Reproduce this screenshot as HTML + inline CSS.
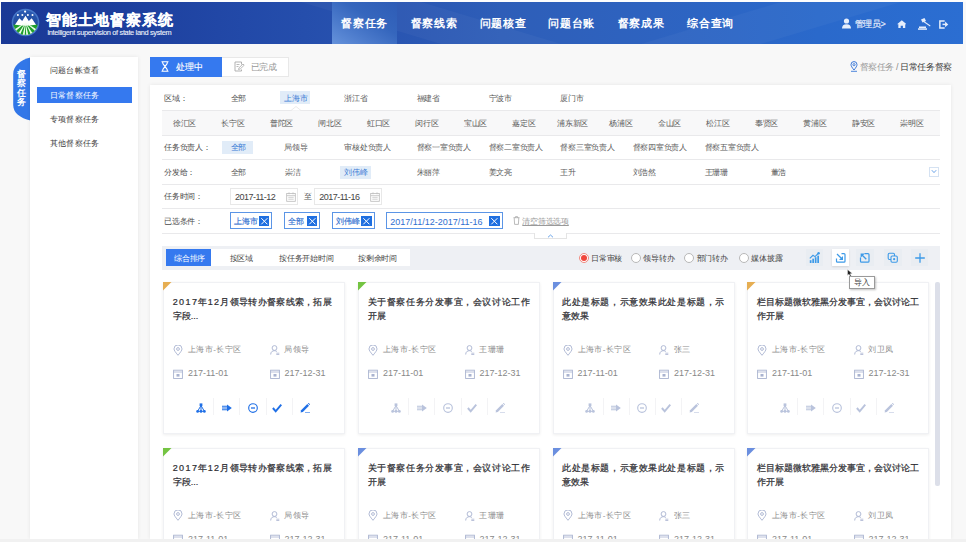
<!DOCTYPE html>
<html><head><meta charset="utf-8">
<style>
*{margin:0;padding:0;box-sizing:border-box}
html,body{width:966px;height:542px;overflow:hidden}
body{position:relative;background:#f8f8f8;font-family:"Liberation Sans",sans-serif;color:#666}
.a{position:absolute;white-space:nowrap}
.nav{top:-0.5px;height:42px;line-height:42px;font-size:11px;letter-spacing:0.8px;font-weight:bold;color:#fff}
.card{position:absolute;width:182px;height:152px;background:#fff;border:1px solid #f0f1f4;box-shadow:0 1px 3px rgba(0,0,0,0.07)}
</style></head>
<body>

<div class="a" style="left:0;top:0;width:966px;height:2px;background:#fdfdfd"></div>
<div class="a" style="left:1px;top:2px;width:962px;height:42px;overflow:hidden;background:linear-gradient(90deg,#1a3996 0%,#1c3d9b 10%,#2249a8 25%,#2853b0 38%,#2e5eb8 52%,#2e63c0 68%,#2a69cb 85%,#2b6ed2 100%)">
  <svg class="a" style="left:0;top:0" width="962" height="42">
    <polygon points="300,0 420,0 560,42 440,42" fill="rgba(255,255,255,0.035)"/>
    <polygon points="780,0 900,0 760,42 640,42" fill="rgba(255,255,255,0.035)"/>
  </svg>
  <div class="a" style="left:331px;top:0;width:65px;height:42px;background:linear-gradient(32deg,#6592db 0%,#4c7bcc 30%,#3566bd 60%,#2e5cb6 100%)"></div>
  <svg class="a" style="left:9px;top:5px" width="32" height="32" viewBox="0 0 32 32">
    <defs><clipPath id="lc"><circle cx="15.5" cy="15.5" r="12.3"/></clipPath>
    <linearGradient id="lg" x1="0" y1="0" x2="0" y2="1"><stop offset="0" stop-color="#2c5cb4"/><stop offset="1" stop-color="#1a3f8e"/></linearGradient></defs>
    <circle cx="15.5" cy="15.5" r="13.8" fill="#4677c8"/>
    <circle cx="15.5" cy="15.5" r="12.3" fill="url(#lg)"/>
    <g clip-path="url(#lc)">
    <path d="M0 19 L4.5 18.5 L9.3 11.3 L12.2 14 L15.5 8.8 L18.8 14 L21.7 11.3 L26.5 18.5 L31 19 L31 31 L0 31 Z" fill="#fff"/>
    <path d="M0 17 Q15.5 20.5 31 17 L31 31 L0 31 Z" fill="#1f9f2a"/>
    <path d="M15.5 15.5 L12 31 L14.6 31 Z M15.5 15.5 L16.4 31 L19 31 Z M15.5 15.5 L6 30 L8.6 31 Z M15.5 15.5 L22.4 31 L25 30 Z M15.5 15.5 L1 24.5 L2.3 27 Z M15.5 15.5 L28.7 27 L30 24.5 Z" fill="#eafbe6"/>
    </g>
    <circle cx="15.1" cy="4.6" r="1.1" fill="#fff"/>
    <circle cx="7.9" cy="7.9" r="1" fill="#fff"/><circle cx="12.4" cy="7.9" r="1" fill="#fff"/>
    <circle cx="17.9" cy="7.9" r="1" fill="#fff"/><circle cx="22.5" cy="7.9" r="1" fill="#fff"/>
  </svg>
  <div class="a" style="left:44.5px;top:7.5px;font-size:15px;font-weight:bold;color:#fff;line-height:20px;letter-spacing:1px;-webkit-text-stroke:0.2px #fff">智能土地督察系统</div>
  <div class="a" style="left:46.5px;top:25.5px;font-size:7.4px;color:#eef3fb;line-height:9px;letter-spacing:-0.33px;-webkit-text-stroke:0.1px #eef3fb">intelligent supervision of state land system</div>
  <div class="a nav" style="left:340px">督察任务</div>
  <div class="a nav" style="left:409.5px">督察线索</div>
  <div class="a nav" style="left:478.5px">问题核查</div>
  <div class="a nav" style="left:547px">问题台账</div>
  <div class="a nav" style="left:616.5px">督察成果</div>
  <div class="a nav" style="left:686px">综合查询</div>
  <svg class="a" style="left:840px;top:16px" width="11" height="11" viewBox="0 0 11 11"><circle cx="5.5" cy="3" r="2.6" fill="#e6eefc"/><path d="M1 10.5 Q1 6.2 5.5 6.2 Q10 6.2 10 10.5 Z" fill="#e6eefc"/></svg>
  <div class="a" style="left:853.5px;top:15.7px;font-size:9px;line-height:12px;color:#e2eafa;letter-spacing:-0.3px;-webkit-text-stroke:0.2px #e2eafa">管理员&gt;</div>
  <svg class="a" style="left:895.8px;top:17.6px" width="9.6" height="8.6" viewBox="0 0 11 10"><path d="M5.5 0.3 L11 5 L9.5 5 L9.5 9.7 L6.8 9.7 L6.8 6.8 L4.2 6.8 L4.2 9.7 L1.5 9.7 L1.5 5 L0 5 Z" fill="#e6eefc"/></svg>
  <svg class="a" style="left:917px;top:16px" width="13" height="12" viewBox="0 0 13 12"><path d="M3 1.5 L6.5 0 L8 3 L4.5 4.5 Z" fill="#e6eefc"/><path d="M6 3 L12.5 7.5 L12 8.5 L5.5 4Z" fill="#e6eefc"/><rect x="1" y="8.5" width="7" height="1.5" fill="#e6eefc"/><rect x="0" y="10.3" width="9" height="1.5" fill="#e6eefc"/></svg>
  <svg class="a" style="left:938px;top:18px" width="9.6" height="8.8" viewBox="0 0 11 10"><path d="M6.5 1 L1 1 L1 9 L6.5 9" fill="none" stroke="#e6eefc" stroke-width="1.7"/><path d="M4 5 L8.5 5" stroke="#e6eefc" stroke-width="1.7"/><path d="M7 1.8 L10.6 5 L7 8.2Z" fill="#e6eefc"/></svg>
</div>
<svg class="a" style="left:12px;top:57px" width="19" height="64" viewBox="0 0 19 64"><path d="M18.5 0.5 C8 3 1.2 9 1.2 17 L1.2 48 C1.2 56 8 61 18.5 63.5 Z" fill="#3277e8"/></svg>
<div class="a" style="left:16.5px;top:69.5px;width:11px;font-size:9px;line-height:9.6px;font-weight:bold;color:#fff;white-space:normal">督<br>察<br>任<br>务</div>
<div class="a" style="left:30px;top:57px;width:107.5px;height:482px;background:#fff;box-shadow:0 0 4px rgba(0,0,0,0.08)"></div>
<div class="a" style="left:37px;top:86.5px;width:95px;height:16.5px;background:#3579ef"></div>
<div class="a" style="left:49.5px;top:64px;font-size:8px;letter-spacing:0.4px;line-height:13px;color:#3c3c3c">问题台帐查看</div>
<div class="a" style="left:49.5px;top:88.5px;font-size:8px;letter-spacing:0.4px;line-height:13px;color:#fff">日常督察任务</div>
<div class="a" style="left:49.5px;top:112.5px;font-size:8px;letter-spacing:0.4px;line-height:13px;color:#3c3c3c">专项督察任务</div>
<div class="a" style="left:49.5px;top:137px;font-size:8px;letter-spacing:0.4px;line-height:13px;color:#3c3c3c">其他督察任务</div>
<div class="a" style="left:150px;top:57px;width:72px;height:19.5px;background:#3579ef"></div>
<svg class="a" style="left:160px;top:61px" width="10" height="11" viewBox="0 0 10 11"><path d="M1.5 0.7 H8.5 M1.5 10.3 H8.5 M2.5 0.7 C2.5 4 5 4.5 5 5.5 C5 6.5 2.5 7 2.5 10.3 M7.5 0.7 C7.5 4 5 4.5 5 5.5 C5 6.5 7.5 7 7.5 10.3" fill="none" stroke="#fff" stroke-width="1.1"/></svg>
<div class="a" style="left:175.5px;top:60.8px;font-size:9px;line-height:12px;color:#fff;-webkit-text-stroke:0.15px #fff">处理中</div>
<div class="a" style="left:222px;top:57px;width:66.5px;height:19.5px;background:#fff;border:1px solid #e8e8e8;border-left:none"></div>
<svg class="a" style="left:234px;top:61px" width="11" height="11" viewBox="0 0 11 11"><path d="M7.5 3.5 V1 H1 V10 H7.5 V8.5" fill="none" stroke="#aaa" stroke-width="0.9"/><path d="M2.5 3.5 H5.5 M2.5 5.5 H4.5" stroke="#aaa" stroke-width="0.8"/><path d="M4.5 8.5 L5 6.8 L9 3 L10.2 4.2 L6.2 8 Z" fill="none" stroke="#aaa" stroke-width="0.8"/></svg>
<div class="a" style="left:250.5px;top:60.5px;font-size:9px;letter-spacing:-0.3px;line-height:12px;color:#999">已完成</div>
<svg class="a" style="left:850px;top:61px" width="8" height="11" viewBox="0 0 8 11"><path d="M4 9 C2 6.5 1 5 1 3.6 A3 3 0 0 1 7 3.6 C7 5 6 6.5 4 9Z" fill="none" stroke="#3a78d8" stroke-width="1"/><circle cx="4" cy="3.7" r="1.1" fill="none" stroke="#3a78d8" stroke-width="0.9"/><path d="M1 10.3 H7" stroke="#3a78d8" stroke-width="0.9"/></svg>
<div class="a" style="left:859.5px;top:60.5px;font-size:9px;letter-spacing:-0.4px;line-height:12px;color:#999">督察任务 <span style="color:#888">/</span> <span style="color:#3a3a3a">日常任务督察</span></div>
<div class="a" style="left:150px;top:85px;width:801px;height:454px;background:#fff;box-shadow:0 0 4px rgba(0,0,0,0.08)"></div>
<div class="a" style="left:161.5px;top:110px;width:778px;height:25px;background:#f8f8f9"></div>
<div class="a" style="left:161.5px;top:109.5px;width:778px;height:1px;background:#e9e9eb"></div>
<div class="a" style="left:161.5px;top:134.5px;width:778px;height:1px;background:#e9e9eb"></div>
<div class="a" style="left:161.5px;top:159.0px;width:778px;height:1px;background:#e9e9eb"></div>
<div class="a" style="left:161.5px;top:183.5px;width:778px;height:1px;background:#e9e9eb"></div>
<div class="a" style="left:161.5px;top:207.8px;width:778px;height:1px;background:#e9e9eb"></div>
<div class="a" style="left:161.5px;top:232.5px;width:778px;height:1px;background:#e9e9eb"></div>
<svg class="a" style="left:291px;top:106px" width="10" height="5"><path d="M0 4.5 L5 0.5 L10 4.5" fill="#fff" stroke="#e6e6e6" stroke-width="0.8"/></svg>
<div class="a" style="left:164px;top:92.8px;line-height:12px;font-size:8px;letter-spacing:-0.25px;color:#4a4a4a;">区域：</div>
<div class="a" style="left:280.4px;top:91.2px;width:30.0px;height:12.799999999999997px;background:#e1ecf8"></div>
<div class="a" style="left:230.6px;top:92.8px;line-height:12px;font-size:8px;letter-spacing:-0.25px;color:#5a5a5a;">全部</div>
<div class="a" style="left:284px;top:92.8px;line-height:12px;font-size:8px;letter-spacing:-0.25px;color:#3a7bd5;">上海市</div>
<div class="a" style="left:344px;top:92.8px;line-height:12px;font-size:8px;letter-spacing:-0.25px;color:#5a5a5a;">浙江省</div>
<div class="a" style="left:416.5px;top:92.8px;line-height:12px;font-size:8px;letter-spacing:-0.25px;color:#5a5a5a;">福建省</div>
<div class="a" style="left:488.7px;top:92.8px;line-height:12px;font-size:8px;letter-spacing:-0.25px;color:#5a5a5a;">宁波市</div>
<div class="a" style="left:560.4px;top:92.8px;line-height:12px;font-size:8px;letter-spacing:-0.25px;color:#5a5a5a;">厦门市</div>
<div class="a" style="left:154.5px;width:60px;text-align:center;top:117.5px;line-height:12px;font-size:8px;letter-spacing:-0.25px;color:#5a5a5a">徐汇区</div>
<div class="a" style="left:203.0px;width:60px;text-align:center;top:117.5px;line-height:12px;font-size:8px;letter-spacing:-0.25px;color:#5a5a5a">长宁区</div>
<div class="a" style="left:251.5px;width:60px;text-align:center;top:117.5px;line-height:12px;font-size:8px;letter-spacing:-0.25px;color:#5a5a5a">普陀区</div>
<div class="a" style="left:300.0px;width:60px;text-align:center;top:117.5px;line-height:12px;font-size:8px;letter-spacing:-0.25px;color:#5a5a5a">闸北区</div>
<div class="a" style="left:348.5px;width:60px;text-align:center;top:117.5px;line-height:12px;font-size:8px;letter-spacing:-0.25px;color:#5a5a5a">虹口区</div>
<div class="a" style="left:397.0px;width:60px;text-align:center;top:117.5px;line-height:12px;font-size:8px;letter-spacing:-0.25px;color:#5a5a5a">闵行区</div>
<div class="a" style="left:445.5px;width:60px;text-align:center;top:117.5px;line-height:12px;font-size:8px;letter-spacing:-0.25px;color:#5a5a5a">宝山区</div>
<div class="a" style="left:494.0px;width:60px;text-align:center;top:117.5px;line-height:12px;font-size:8px;letter-spacing:-0.25px;color:#5a5a5a">嘉定区</div>
<div class="a" style="left:542.5px;width:60px;text-align:center;top:117.5px;line-height:12px;font-size:8px;letter-spacing:-0.25px;color:#5a5a5a">浦东新区</div>
<div class="a" style="left:591.0px;width:60px;text-align:center;top:117.5px;line-height:12px;font-size:8px;letter-spacing:-0.25px;color:#5a5a5a">杨浦区</div>
<div class="a" style="left:639.5px;width:60px;text-align:center;top:117.5px;line-height:12px;font-size:8px;letter-spacing:-0.25px;color:#5a5a5a">金山区</div>
<div class="a" style="left:688.0px;width:60px;text-align:center;top:117.5px;line-height:12px;font-size:8px;letter-spacing:-0.25px;color:#5a5a5a">松江区</div>
<div class="a" style="left:736.5px;width:60px;text-align:center;top:117.5px;line-height:12px;font-size:8px;letter-spacing:-0.25px;color:#5a5a5a">奉贤区</div>
<div class="a" style="left:785.0px;width:60px;text-align:center;top:117.5px;line-height:12px;font-size:8px;letter-spacing:-0.25px;color:#5a5a5a">黄浦区</div>
<div class="a" style="left:833.5px;width:60px;text-align:center;top:117.5px;line-height:12px;font-size:8px;letter-spacing:-0.25px;color:#5a5a5a">静安区</div>
<div class="a" style="left:882.0px;width:60px;text-align:center;top:117.5px;line-height:12px;font-size:8px;letter-spacing:-0.25px;color:#5a5a5a">崇明区</div>
<div class="a" style="left:164px;top:142.10000000000002px;line-height:12px;font-size:8px;letter-spacing:-0.25px;color:#4a4a4a;">任务负责人：</div>
<div class="a" style="left:222.3px;top:141.3px;width:30.599999999999994px;height:12.5px;background:#e1ecf8"></div>
<div class="a" style="left:230.6px;top:142.10000000000002px;line-height:12px;font-size:8px;letter-spacing:-0.25px;color:#3a7bd5;">全部</div>
<div class="a" style="left:284px;top:142.10000000000002px;line-height:12px;font-size:8px;letter-spacing:-0.25px;color:#5a5a5a;">局领导</div>
<div class="a" style="left:344.4px;top:142.10000000000002px;line-height:12px;font-size:8px;letter-spacing:-0.25px;color:#5a5a5a;">审核处负责人</div>
<div class="a" style="left:416.5px;top:142.10000000000002px;line-height:12px;font-size:8px;letter-spacing:-0.25px;color:#5a5a5a;">督察一室负责人</div>
<div class="a" style="left:488.7px;top:142.10000000000002px;line-height:12px;font-size:8px;letter-spacing:-0.25px;color:#5a5a5a;">督察二室负责人</div>
<div class="a" style="left:560.4px;top:142.10000000000002px;line-height:12px;font-size:8px;letter-spacing:-0.25px;color:#5a5a5a;">督察三室负责人</div>
<div class="a" style="left:632.5px;top:142.10000000000002px;line-height:12px;font-size:8px;letter-spacing:-0.25px;color:#5a5a5a;">督察四室负责人</div>
<div class="a" style="left:704.7px;top:142.10000000000002px;line-height:12px;font-size:8px;letter-spacing:-0.25px;color:#5a5a5a;">督察五室负责人</div>
<div class="a" style="left:164px;top:167.10000000000002px;line-height:12px;font-size:8px;letter-spacing:-0.25px;color:#4a4a4a;">分发给：</div>
<div class="a" style="left:340.4px;top:166.4px;width:30.400000000000034px;height:12.799999999999983px;background:#e1ecf8"></div>
<div class="a" style="left:230.6px;top:167.10000000000002px;line-height:12px;font-size:8px;letter-spacing:-0.25px;color:#5a5a5a;">全部</div>
<div class="a" style="left:285px;top:167.10000000000002px;line-height:12px;font-size:8px;letter-spacing:-0.25px;color:#5a5a5a;">崇洁</div>
<div class="a" style="left:344.4px;top:167.10000000000002px;line-height:12px;font-size:8px;letter-spacing:-0.25px;color:#3a7bd5;">刘伟峰</div>
<div class="a" style="left:416.5px;top:167.10000000000002px;line-height:12px;font-size:8px;letter-spacing:-0.25px;color:#5a5a5a;">朱丽萍</div>
<div class="a" style="left:488.7px;top:167.10000000000002px;line-height:12px;font-size:8px;letter-spacing:-0.25px;color:#5a5a5a;">姜文亮</div>
<div class="a" style="left:560.4px;top:167.10000000000002px;line-height:12px;font-size:8px;letter-spacing:-0.25px;color:#5a5a5a;">王升</div>
<div class="a" style="left:632.5px;top:167.10000000000002px;line-height:12px;font-size:8px;letter-spacing:-0.25px;color:#5a5a5a;">刘浩然</div>
<div class="a" style="left:704.7px;top:167.10000000000002px;line-height:12px;font-size:8px;letter-spacing:-0.25px;color:#5a5a5a;">王珊珊</div>
<div class="a" style="left:770.5px;top:167.10000000000002px;line-height:12px;font-size:8px;letter-spacing:-0.25px;color:#5a5a5a;">董浩</div>
<div class="a" style="left:928.6px;top:166.6px;width:10.4px;height:10px;border:1px solid #d5e2f2;background:#fff"></div>
<svg class="a" style="left:930.8px;top:169px" width="6" height="5"><path d="M0.8 1.2 L3 3.6 L5.2 1.2" fill="none" stroke="#5a9ae6" stroke-width="0.9"/></svg>
<div class="a" style="left:164px;top:191.3px;line-height:12px;font-size:8px;letter-spacing:-0.25px;color:#4a4a4a;">任务时间：</div>
<div class="a" style="left:230px;top:188.4px;width:68.19999999999999px;height:17px;border:1px solid #e8e8e8;background:#fff"></div>
<div class="a" style="left:235px;top:191.3px;line-height:12px;font-size:9px;letter-spacing:-0.5px;color:#444;">2017-11-12</div>
<svg class="a" style="left:285.7px;top:191.5px" width="10" height="10" viewBox="0 0 10 10"><rect x="0.7" y="1.5" width="8.6" height="7.8" fill="none" stroke="#bbb" stroke-width="0.8"/><path d="M0.7 3.6 H9.3 M3 0.3 V2.3 M7 0.3 V2.3 M2.3 5.3 H7.7 M2.3 7.2 H7.7" stroke="#bbb" stroke-width="0.7"/></svg>
<div class="a" style="left:314.2px;top:188.4px;width:68.30000000000001px;height:17px;border:1px solid #e8e8e8;background:#fff"></div>
<div class="a" style="left:319.2px;top:191.3px;line-height:12px;font-size:9px;letter-spacing:-0.5px;color:#444;">2017-11-16</div>
<svg class="a" style="left:370.0px;top:191.5px" width="10" height="10" viewBox="0 0 10 10"><rect x="0.7" y="1.5" width="8.6" height="7.8" fill="none" stroke="#bbb" stroke-width="0.8"/><path d="M0.7 3.6 H9.3 M3 0.3 V2.3 M7 0.3 V2.3 M2.3 5.3 H7.7 M2.3 7.2 H7.7" stroke="#bbb" stroke-width="0.7"/></svg>
<div class="a" style="left:304px;top:191.3px;line-height:12px;font-size:8px;letter-spacing:-0.25px;color:#5a5a5a;">至</div>
<div class="a" style="left:164px;top:215.8px;line-height:12px;font-size:8px;letter-spacing:-0.25px;color:#4a4a4a;">已选条件：</div>
<div class="a" style="left:230px;top:212px;width:42px;height:17px;border:1px solid #5b95e6;background:#fff"></div>
<div class="a" style="left:234px;top:215.8px;line-height:12px;font-size:8px;letter-spacing:-0.25px;color:#2f6fd0;-webkit-text-stroke:0.15px #2f6fd0">上海市</div>
<div class="a" style="left:258.7px;top:215.8px;width:10.7px;height:10.5px;background:#1f6fe0"></div><svg class="a" style="left:258.7px;top:215.8px" width="10.7" height="10.5"><path d="M2.3 2.2 L8.4 8.3 M8.4 2.2 L2.3 8.3" stroke="#fff" stroke-width="1"/></svg>
<div class="a" style="left:284px;top:212px;width:35.80000000000001px;height:17px;border:1px solid #5b95e6;background:#fff"></div>
<div class="a" style="left:288px;top:215.8px;line-height:12px;font-size:8px;letter-spacing:-0.25px;color:#2f6fd0;-webkit-text-stroke:0.15px #2f6fd0">全部</div>
<div class="a" style="left:306.5px;top:215.8px;width:10.7px;height:10.5px;background:#1f6fe0"></div><svg class="a" style="left:306.5px;top:215.8px" width="10.7" height="10.5"><path d="M2.3 2.2 L8.4 8.3 M8.4 2.2 L2.3 8.3" stroke="#fff" stroke-width="1"/></svg>
<div class="a" style="left:332px;top:212px;width:42.5px;height:17px;border:1px solid #5b95e6;background:#fff"></div>
<div class="a" style="left:336px;top:215.8px;line-height:12px;font-size:8px;letter-spacing:-0.25px;color:#2f6fd0;-webkit-text-stroke:0.15px #2f6fd0">刘伟峰</div>
<div class="a" style="left:361.2px;top:215.8px;width:10.7px;height:10.5px;background:#1f6fe0"></div><svg class="a" style="left:361.2px;top:215.8px" width="10.7" height="10.5"><path d="M2.3 2.2 L8.4 8.3 M8.4 2.2 L2.3 8.3" stroke="#fff" stroke-width="1"/></svg>
<div class="a" style="left:386.3px;top:212px;width:116.39999999999998px;height:17px;border:1px solid #5b95e6;background:#fff"></div>
<div class="a" style="left:390.3px;top:215.8px;line-height:12px;font-size:9px;letter-spacing:0px;color:#2f6fd0;">2017/11/12-2017/11-16</div>
<div class="a" style="left:489.4px;top:215.8px;width:10.7px;height:10.5px;background:#1f6fe0"></div><svg class="a" style="left:489.4px;top:215.8px" width="10.7" height="10.5"><path d="M2.3 2.2 L8.4 8.3 M8.4 2.2 L2.3 8.3" stroke="#fff" stroke-width="1"/></svg>
<svg class="a" style="left:512.5px;top:216px" width="7" height="9" viewBox="0 0 7 9"><path d="M0.5 1.7 H6.5 M2.5 1.7 V0.6 H4.5 V1.7 M1.2 1.7 L1.6 8.4 H5.4 L5.8 1.7" fill="none" stroke="#aaa" stroke-width="0.8"/></svg>
<div class="a" style="left:522.3px;top:215.8px;line-height:12px;font-size:8px;letter-spacing:-0.25px;color:#999;"><span style="text-decoration:underline">清空筛选选项</span></div>
<div class="a" style="left:533.8px;top:232.5px;width:33.5px;height:6.5px;border:1px solid #e4e4e4;border-top:none;background:#fff"></div>
<svg class="a" style="left:547px;top:234px" width="7" height="4"><path d="M1 3.3 L3.5 1 L6 3.3" fill="none" stroke="#5a9ae6" stroke-width="0.9"/></svg>
<div class="a" style="left:162px;top:245.5px;width:777.5px;height:24px;background:#eef0f4"></div>
<div class="a" style="left:166px;top:249px;width:243.6px;height:17.3px;background:#fff"></div>
<div class="a" style="left:166px;top:249px;width:44.8px;height:17.3px;background:#3579ef"></div>
<div class="a" style="left:174px;top:252.5px;line-height:12px;font-size:8px;letter-spacing:-0.25px;color:#fff;">综合排序</div>
<div class="a" style="left:229.6px;top:252.5px;line-height:12px;font-size:8px;letter-spacing:-0.25px;color:#444;">按区域</div>
<div class="a" style="left:279px;top:252.5px;line-height:12px;font-size:8px;letter-spacing:-0.25px;color:#444;">按任务开始时间</div>
<div class="a" style="left:358px;top:252.5px;line-height:12px;font-size:8px;letter-spacing:-0.25px;color:#444;">按剩余时间</div>
<div class="a" style="left:578.6px;top:252.89999999999998px;width:10px;height:10px;border-radius:50%;border:1px solid #f08a80;background:#fff"></div>
<div class="a" style="left:580.6px;top:254.89999999999998px;width:6px;height:6px;border-radius:50%;background:#f0463c"></div>
<div class="a" style="left:591.1px;top:252.5px;line-height:12px;font-size:8px;letter-spacing:-0.25px;color:#444;">日常审核</div>
<div class="a" style="left:630.8px;top:252.89999999999998px;width:10px;height:10px;border-radius:50%;border:1px solid #b8b8b8;background:#fff"></div>
<div class="a" style="left:643.3px;top:252.5px;line-height:12px;font-size:8px;letter-spacing:-0.25px;color:#444;">领导转办</div>
<div class="a" style="left:684.2px;top:252.89999999999998px;width:10px;height:10px;border-radius:50%;border:1px solid #b8b8b8;background:#fff"></div>
<div class="a" style="left:696.7px;top:252.5px;line-height:12px;font-size:8px;letter-spacing:-0.25px;color:#444;">部门转办</div>
<div class="a" style="left:738.9px;top:252.89999999999998px;width:10px;height:10px;border-radius:50%;border:1px solid #b8b8b8;background:#fff"></div>
<div class="a" style="left:751.4px;top:252.5px;line-height:12px;font-size:8px;letter-spacing:-0.25px;color:#444;">媒体披露</div>
<div class="a" style="left:805.7px;top:248.5px;width:17.5px;height:17px;background:#e9edf2;"></div>
<svg class="a" style="left:805.7px;top:248.5px" width="17.5" height="17" viewBox="0 0 17.5 17"><rect x="3.8" y="11.2" width="1.7" height="2.8" fill="#3d9ae8"/><rect x="6.3" y="9.7" width="1.7" height="4.3" fill="#3d9ae8"/><rect x="8.8" y="8.2" width="1.7" height="5.8" fill="#3d9ae8"/><rect x="11.3" y="6.7" width="1.7" height="7.3" fill="#3d9ae8"/><path d="M3.8 9.3 L7 6.3 L9 7.6 L12.3 4.5" fill="none" stroke="#3d9ae8" stroke-width="1.1"/><circle cx="12.6" cy="4.2" r="1.2" fill="#3d9ae8"/></svg>
<div class="a" style="left:831.5px;top:248.5px;width:17.5px;height:17px;background:#fff;box-shadow:0 1px 2px rgba(0,0,0,0.12);"></div>
<svg class="a" style="left:831.5px;top:248.5px" width="17.5" height="17" viewBox="0 0 17.5 17"><path d="M9.5 4.6 H12 Q13 4.6 13 5.6 V12.2 Q13 13.2 12 13.2 H5.5 Q4.5 13.2 4.5 12.2 V9.5" fill="none" stroke="#3d9ae8" stroke-width="1.2"/><path d="M5 5 L9.8 9.8" stroke="#3d9ae8" stroke-width="1.3"/><path d="M11 11 L11 7 L7 11Z" fill="#3d9ae8"/></svg>
<div class="a" style="left:856.4px;top:248.5px;width:17.5px;height:17px;background:#e9edf2;"></div>
<svg class="a" style="left:856.4px;top:248.5px" width="17.5" height="17" viewBox="0 0 17.5 17"><path d="M8.5 4.6 H12 Q13 4.6 13 5.6 V12.2 Q13 13.2 12 13.2 H5.5 Q4.5 13.2 4.5 12.2 V8.5" fill="none" stroke="#3d9ae8" stroke-width="1.2"/><path d="M10.3 10.3 L6 6" stroke="#3d9ae8" stroke-width="1.3"/><path d="M4.6 4.6 L8.8 4.6 L4.6 8.8Z" fill="#3d9ae8"/></svg>
<div class="a" style="left:884px;top:248.5px;width:17.5px;height:17px;background:#e9edf2;"></div>
<svg class="a" style="left:884px;top:248.5px" width="17.5" height="17" viewBox="0 0 17.5 17"><rect x="4.2" y="4.2" width="6.3" height="6.3" rx="1.2" fill="none" stroke="#3d9ae8" stroke-width="1.1"/><rect x="7" y="7" width="6.3" height="6.3" rx="1.2" fill="#e9edf2" stroke="#3d9ae8" stroke-width="1.1"/><circle cx="10.15" cy="10.15" r="1.1" fill="#3d9ae8"/></svg>
<div class="a" style="left:910.8px;top:248.5px;width:17.5px;height:17px;background:#e9edf2;"></div>
<svg class="a" style="left:910.8px;top:248.5px" width="17.5" height="17" viewBox="0 0 17.5 17"><path d="M9 4.2 V13.8 M4.2 9 H13.8" stroke="#3d9ae8" stroke-width="1.3"/></svg>
<div class="card" style="left:163px;top:282px"></div>
<svg class="a" style="left:163px;top:282px" width="9" height="9"><path d="M0 0 H8.5 L0 8.5Z" fill="#e6ae52"/></svg>
<div class="a" style="left:172.7px;top:296px;width:162px;font-size:9px;line-height:13.8px;color:#2e2e33;-webkit-text-stroke:0.22px #2e2e33;white-space:normal"><div style="letter-spacing:0.3px"><span style="letter-spacing:1.4px">2017</span>年<span style="letter-spacing:1.4px">12</span>月领导转办督察线索，拓展</div><div>字段...</div></div>
<svg class="a" style="left:173px;top:344.5px" width="10" height="11" viewBox="0 0 10 11"><path d="M5 10.3 C2.3 7 1 5.3 1 3.9 A4 4 0 0 1 9 3.9 C9 5.3 7.7 7 5 10.3Z" fill="none" stroke="#a9b3d0" stroke-width="0.9"/><circle cx="5" cy="4" r="1.4" fill="none" stroke="#a9b3d0" stroke-width="0.9"/></svg>
<div class="a" style="left:188px;top:344px;font-size:8px;letter-spacing:0.4px;line-height:12px;color:#8c8c8c">上海市-长宁区</div>
<svg class="a" style="left:269.8px;top:345px" width="10" height="10" viewBox="0 0 10 10"><circle cx="4.5" cy="3" r="2.4" fill="none" stroke="#a9b3d0" stroke-width="0.9"/><path d="M0.7 9.5 C0.7 6.8 2.4 5.7 4.5 5.7 C5.5 5.7 6.3 6 6.9 6.5" fill="none" stroke="#a9b3d0" stroke-width="0.9"/><path d="M6.3 8.2 H9.3 M6.3 9.5 H9.3" stroke="#a9b3d0" stroke-width="0.8"/></svg>
<div class="a" style="left:284.4px;top:344px;font-size:8px;letter-spacing:0.4px;line-height:12px;color:#8c8c8c">局领导</div>
<svg class="a" style="left:173px;top:368.5px" width="10" height="10" viewBox="0 0 10 10"><rect x="0.6" y="1.2" width="8.8" height="8.3" fill="none" stroke="#a9b3d0" stroke-width="0.9"/><path d="M0.6 3 H9.4" stroke="#a9b3d0" stroke-width="0.8"/><rect x="3.5" y="5" width="3" height="2.6" fill="#a9b3d0"/></svg>
<div class="a" style="left:188px;top:367px;font-size:9px;line-height:12px;color:#888">217-11-01</div>
<svg class="a" style="left:269.8px;top:368.5px" width="10" height="10" viewBox="0 0 10 10"><rect x="0.6" y="1.2" width="8.8" height="8.3" fill="none" stroke="#a9b3d0" stroke-width="0.9"/><path d="M0.6 3 H9.4" stroke="#a9b3d0" stroke-width="0.8"/><rect x="3.5" y="5" width="3" height="2.6" fill="#a9b3d0"/></svg>
<div class="a" style="left:284.4px;top:367px;font-size:9px;line-height:12px;color:#888">217-12-31</div>
<svg class="a" style="left:195.5px;top:402.5px" width="10" height="10" viewBox="0 0 10 10"><rect x="3.6" y="0.4" width="2.8" height="2.6" fill="#1f6fe6"/><path d="M5 2.5 L1.6 8.3 M5 2.5 L8.4 8.3 M5 2.5 V8.3 M1.6 8.3 H8.4" fill="none" stroke="#1f6fe6" stroke-width="1"/><circle cx="1.6" cy="8.4" r="1.35" fill="#1f6fe6"/><circle cx="5" cy="8.4" r="1.35" fill="#1f6fe6"/><circle cx="8.4" cy="8.4" r="1.35" fill="#1f6fe6"/></svg>
<svg class="a" style="left:221.5px;top:402.5px" width="10" height="10" viewBox="0 0 10 10"><path d="M0 3.3 H5.5 M0 5 H5.5 M0 6.7 H5.5" stroke="#1f6fe6" stroke-width="1.05"/><path d="M5 1.6 L9.8 5 L5 8.4Z" fill="#1f6fe6"/></svg>
<svg class="a" style="left:247.8px;top:402.5px" width="10" height="10" viewBox="0 0 10 10"><circle cx="5" cy="5" r="4.3" fill="none" stroke="#1f6fe6" stroke-width="1.15"/><path d="M3 5 H7" stroke="#1f6fe6" stroke-width="1.3"/></svg>
<svg class="a" style="left:271.6px;top:402.5px" width="10" height="10" viewBox="0 0 10 10"><path d="M0.9 5 L3.7 8.3 L9.3 1.6" fill="none" stroke="#1f6fe6" stroke-width="2"/></svg>
<svg class="a" style="left:299.8px;top:402.5px" width="10" height="10" viewBox="0 0 10 10"><path d="M0.6 9.4 L1.1 7.2 L7.3 1 L9 2.7 L2.8 8.9 Z" fill="#1f6fe6"/><path d="M7.9 0.4 L8.5 -0.2 L10.2 1.5 L9.6 2.1Z" fill="#1f6fe6"/><path d="M5 9.7 H10" stroke="#1f6fe6" stroke-width="0.7"/></svg>
<div class="a" style="left:213px;top:397.5px;width:1px;height:17.5px;background:#f3f3f5"></div>
<div class="a" style="left:239.3px;top:397.5px;width:1px;height:17.5px;background:#f3f3f5"></div>
<div class="a" style="left:265.7px;top:397.5px;width:1px;height:17.5px;background:#f3f3f5"></div>
<div class="a" style="left:291.8px;top:397.5px;width:1px;height:17.5px;background:#f3f3f5"></div>
<div class="card" style="left:358px;top:282px"></div>
<svg class="a" style="left:358px;top:282px" width="9" height="9"><path d="M0 0 H8.5 L0 8.5Z" fill="#74c442"/></svg>
<div class="a" style="left:367.7px;top:296px;width:162px;font-size:9px;line-height:13.8px;color:#2e2e33;-webkit-text-stroke:0.22px #2e2e33;white-space:normal"><div style="text-align:justify;text-align-last:justify">关于督察任务分发事宜，会议讨论工作</div><div>开展</div></div>
<svg class="a" style="left:368px;top:344.5px" width="10" height="11" viewBox="0 0 10 11"><path d="M5 10.3 C2.3 7 1 5.3 1 3.9 A4 4 0 0 1 9 3.9 C9 5.3 7.7 7 5 10.3Z" fill="none" stroke="#a9b3d0" stroke-width="0.9"/><circle cx="5" cy="4" r="1.4" fill="none" stroke="#a9b3d0" stroke-width="0.9"/></svg>
<div class="a" style="left:383px;top:344px;font-size:8px;letter-spacing:0.4px;line-height:12px;color:#8c8c8c">上海市-长宁区</div>
<svg class="a" style="left:464.8px;top:345px" width="10" height="10" viewBox="0 0 10 10"><circle cx="4.5" cy="3" r="2.4" fill="none" stroke="#a9b3d0" stroke-width="0.9"/><path d="M0.7 9.5 C0.7 6.8 2.4 5.7 4.5 5.7 C5.5 5.7 6.3 6 6.9 6.5" fill="none" stroke="#a9b3d0" stroke-width="0.9"/><path d="M6.3 8.2 H9.3 M6.3 9.5 H9.3" stroke="#a9b3d0" stroke-width="0.8"/></svg>
<div class="a" style="left:479.4px;top:344px;font-size:8px;letter-spacing:0.4px;line-height:12px;color:#8c8c8c">王珊珊</div>
<svg class="a" style="left:368px;top:368.5px" width="10" height="10" viewBox="0 0 10 10"><rect x="0.6" y="1.2" width="8.8" height="8.3" fill="none" stroke="#a9b3d0" stroke-width="0.9"/><path d="M0.6 3 H9.4" stroke="#a9b3d0" stroke-width="0.8"/><rect x="3.5" y="5" width="3" height="2.6" fill="#a9b3d0"/></svg>
<div class="a" style="left:383px;top:367px;font-size:9px;line-height:12px;color:#888">217-11-01</div>
<svg class="a" style="left:464.8px;top:368.5px" width="10" height="10" viewBox="0 0 10 10"><rect x="0.6" y="1.2" width="8.8" height="8.3" fill="none" stroke="#a9b3d0" stroke-width="0.9"/><path d="M0.6 3 H9.4" stroke="#a9b3d0" stroke-width="0.8"/><rect x="3.5" y="5" width="3" height="2.6" fill="#a9b3d0"/></svg>
<div class="a" style="left:479.4px;top:367px;font-size:9px;line-height:12px;color:#888">217-12-31</div>
<svg class="a" style="left:390.5px;top:402.5px" width="10" height="10" viewBox="0 0 10 10"><rect x="3.6" y="0.4" width="2.8" height="2.6" fill="#b9c3dc"/><path d="M5 2.5 L1.6 8.3 M5 2.5 L8.4 8.3 M5 2.5 V8.3 M1.6 8.3 H8.4" fill="none" stroke="#b9c3dc" stroke-width="1"/><circle cx="1.6" cy="8.4" r="1.35" fill="#b9c3dc"/><circle cx="5" cy="8.4" r="1.35" fill="#b9c3dc"/><circle cx="8.4" cy="8.4" r="1.35" fill="#b9c3dc"/></svg>
<svg class="a" style="left:416.5px;top:402.5px" width="10" height="10" viewBox="0 0 10 10"><path d="M0 3.3 H5.5 M0 5 H5.5 M0 6.7 H5.5" stroke="#b9c3dc" stroke-width="1.05"/><path d="M5 1.6 L9.8 5 L5 8.4Z" fill="#b9c3dc"/></svg>
<svg class="a" style="left:442.8px;top:402.5px" width="10" height="10" viewBox="0 0 10 10"><circle cx="5" cy="5" r="4.3" fill="none" stroke="#b9c3dc" stroke-width="1.15"/><path d="M3 5 H7" stroke="#b9c3dc" stroke-width="1.3"/></svg>
<svg class="a" style="left:466.6px;top:402.5px" width="10" height="10" viewBox="0 0 10 10"><path d="M0.9 5 L3.7 8.3 L9.3 1.6" fill="none" stroke="#b9c3dc" stroke-width="2"/></svg>
<svg class="a" style="left:494.8px;top:402.5px" width="10" height="10" viewBox="0 0 10 10"><path d="M0.6 9.4 L1.1 7.2 L7.3 1 L9 2.7 L2.8 8.9 Z" fill="#b9c3dc"/><path d="M7.9 0.4 L8.5 -0.2 L10.2 1.5 L9.6 2.1Z" fill="#b9c3dc"/><path d="M5 9.7 H10" stroke="#b9c3dc" stroke-width="0.7"/></svg>
<div class="a" style="left:408px;top:397.5px;width:1px;height:17.5px;background:#f3f3f5"></div>
<div class="a" style="left:434.3px;top:397.5px;width:1px;height:17.5px;background:#f3f3f5"></div>
<div class="a" style="left:460.7px;top:397.5px;width:1px;height:17.5px;background:#f3f3f5"></div>
<div class="a" style="left:486.8px;top:397.5px;width:1px;height:17.5px;background:#f3f3f5"></div>
<div class="card" style="left:552.5px;top:282px"></div>
<svg class="a" style="left:552.5px;top:282px" width="9" height="9"><path d="M0 0 H8.5 L0 8.5Z" fill="#6b8fdf"/></svg>
<div class="a" style="left:562.2px;top:296px;width:162px;font-size:9px;line-height:13.8px;color:#2e2e33;-webkit-text-stroke:0.22px #2e2e33;white-space:normal"><div style="text-align:justify;text-align-last:justify">此处是标题，示意效果此处是标题，示</div><div>意效果</div></div>
<svg class="a" style="left:562.5px;top:344.5px" width="10" height="11" viewBox="0 0 10 11"><path d="M5 10.3 C2.3 7 1 5.3 1 3.9 A4 4 0 0 1 9 3.9 C9 5.3 7.7 7 5 10.3Z" fill="none" stroke="#a9b3d0" stroke-width="0.9"/><circle cx="5" cy="4" r="1.4" fill="none" stroke="#a9b3d0" stroke-width="0.9"/></svg>
<div class="a" style="left:577.5px;top:344px;font-size:8px;letter-spacing:0.4px;line-height:12px;color:#8c8c8c">上海市-长宁区</div>
<svg class="a" style="left:659.3px;top:345px" width="10" height="10" viewBox="0 0 10 10"><circle cx="4.5" cy="3" r="2.4" fill="none" stroke="#a9b3d0" stroke-width="0.9"/><path d="M0.7 9.5 C0.7 6.8 2.4 5.7 4.5 5.7 C5.5 5.7 6.3 6 6.9 6.5" fill="none" stroke="#a9b3d0" stroke-width="0.9"/><path d="M6.3 8.2 H9.3 M6.3 9.5 H9.3" stroke="#a9b3d0" stroke-width="0.8"/></svg>
<div class="a" style="left:673.9px;top:344px;font-size:8px;letter-spacing:0.4px;line-height:12px;color:#8c8c8c">张三</div>
<svg class="a" style="left:562.5px;top:368.5px" width="10" height="10" viewBox="0 0 10 10"><rect x="0.6" y="1.2" width="8.8" height="8.3" fill="none" stroke="#a9b3d0" stroke-width="0.9"/><path d="M0.6 3 H9.4" stroke="#a9b3d0" stroke-width="0.8"/><rect x="3.5" y="5" width="3" height="2.6" fill="#a9b3d0"/></svg>
<div class="a" style="left:577.5px;top:367px;font-size:9px;line-height:12px;color:#888">217-11-01</div>
<svg class="a" style="left:659.3px;top:368.5px" width="10" height="10" viewBox="0 0 10 10"><rect x="0.6" y="1.2" width="8.8" height="8.3" fill="none" stroke="#a9b3d0" stroke-width="0.9"/><path d="M0.6 3 H9.4" stroke="#a9b3d0" stroke-width="0.8"/><rect x="3.5" y="5" width="3" height="2.6" fill="#a9b3d0"/></svg>
<div class="a" style="left:673.9px;top:367px;font-size:9px;line-height:12px;color:#888">217-12-31</div>
<svg class="a" style="left:585.0px;top:402.5px" width="10" height="10" viewBox="0 0 10 10"><rect x="3.6" y="0.4" width="2.8" height="2.6" fill="#b9c3dc"/><path d="M5 2.5 L1.6 8.3 M5 2.5 L8.4 8.3 M5 2.5 V8.3 M1.6 8.3 H8.4" fill="none" stroke="#b9c3dc" stroke-width="1"/><circle cx="1.6" cy="8.4" r="1.35" fill="#b9c3dc"/><circle cx="5" cy="8.4" r="1.35" fill="#b9c3dc"/><circle cx="8.4" cy="8.4" r="1.35" fill="#b9c3dc"/></svg>
<svg class="a" style="left:611.0px;top:402.5px" width="10" height="10" viewBox="0 0 10 10"><path d="M0 3.3 H5.5 M0 5 H5.5 M0 6.7 H5.5" stroke="#b9c3dc" stroke-width="1.05"/><path d="M5 1.6 L9.8 5 L5 8.4Z" fill="#b9c3dc"/></svg>
<svg class="a" style="left:637.3px;top:402.5px" width="10" height="10" viewBox="0 0 10 10"><circle cx="5" cy="5" r="4.3" fill="none" stroke="#b9c3dc" stroke-width="1.15"/><path d="M3 5 H7" stroke="#b9c3dc" stroke-width="1.3"/></svg>
<svg class="a" style="left:661.1px;top:402.5px" width="10" height="10" viewBox="0 0 10 10"><path d="M0.9 5 L3.7 8.3 L9.3 1.6" fill="none" stroke="#b9c3dc" stroke-width="2"/></svg>
<svg class="a" style="left:689.3px;top:402.5px" width="10" height="10" viewBox="0 0 10 10"><path d="M0.6 9.4 L1.1 7.2 L7.3 1 L9 2.7 L2.8 8.9 Z" fill="#b9c3dc"/><path d="M7.9 0.4 L8.5 -0.2 L10.2 1.5 L9.6 2.1Z" fill="#b9c3dc"/><path d="M5 9.7 H10" stroke="#b9c3dc" stroke-width="0.7"/></svg>
<div class="a" style="left:602.5px;top:397.5px;width:1px;height:17.5px;background:#f3f3f5"></div>
<div class="a" style="left:628.8px;top:397.5px;width:1px;height:17.5px;background:#f3f3f5"></div>
<div class="a" style="left:655.2px;top:397.5px;width:1px;height:17.5px;background:#f3f3f5"></div>
<div class="a" style="left:681.3px;top:397.5px;width:1px;height:17.5px;background:#f3f3f5"></div>
<div class="card" style="left:747px;top:282px"></div>
<svg class="a" style="left:747px;top:282px" width="9" height="9"><path d="M0 0 H8.5 L0 8.5Z" fill="#e6ae52"/></svg>
<div class="a" style="left:756.7px;top:296px;width:162px;font-size:9px;line-height:13.8px;color:#2e2e33;-webkit-text-stroke:0.22px #2e2e33;white-space:normal"><div style="text-align:justify;text-align-last:justify">栏目标题微软雅黑分发事宜，会议讨论工</div><div>作开展</div></div>
<svg class="a" style="left:757px;top:344.5px" width="10" height="11" viewBox="0 0 10 11"><path d="M5 10.3 C2.3 7 1 5.3 1 3.9 A4 4 0 0 1 9 3.9 C9 5.3 7.7 7 5 10.3Z" fill="none" stroke="#a9b3d0" stroke-width="0.9"/><circle cx="5" cy="4" r="1.4" fill="none" stroke="#a9b3d0" stroke-width="0.9"/></svg>
<div class="a" style="left:772px;top:344px;font-size:8px;letter-spacing:0.4px;line-height:12px;color:#8c8c8c">上海市-长宁区</div>
<svg class="a" style="left:853.8px;top:345px" width="10" height="10" viewBox="0 0 10 10"><circle cx="4.5" cy="3" r="2.4" fill="none" stroke="#a9b3d0" stroke-width="0.9"/><path d="M0.7 9.5 C0.7 6.8 2.4 5.7 4.5 5.7 C5.5 5.7 6.3 6 6.9 6.5" fill="none" stroke="#a9b3d0" stroke-width="0.9"/><path d="M6.3 8.2 H9.3 M6.3 9.5 H9.3" stroke="#a9b3d0" stroke-width="0.8"/></svg>
<div class="a" style="left:868.4px;top:344px;font-size:8px;letter-spacing:0.4px;line-height:12px;color:#8c8c8c">刘卫凤</div>
<svg class="a" style="left:757px;top:368.5px" width="10" height="10" viewBox="0 0 10 10"><rect x="0.6" y="1.2" width="8.8" height="8.3" fill="none" stroke="#a9b3d0" stroke-width="0.9"/><path d="M0.6 3 H9.4" stroke="#a9b3d0" stroke-width="0.8"/><rect x="3.5" y="5" width="3" height="2.6" fill="#a9b3d0"/></svg>
<div class="a" style="left:772px;top:367px;font-size:9px;line-height:12px;color:#888">217-11-01</div>
<svg class="a" style="left:853.8px;top:368.5px" width="10" height="10" viewBox="0 0 10 10"><rect x="0.6" y="1.2" width="8.8" height="8.3" fill="none" stroke="#a9b3d0" stroke-width="0.9"/><path d="M0.6 3 H9.4" stroke="#a9b3d0" stroke-width="0.8"/><rect x="3.5" y="5" width="3" height="2.6" fill="#a9b3d0"/></svg>
<div class="a" style="left:868.4px;top:367px;font-size:9px;line-height:12px;color:#888">217-12-31</div>
<svg class="a" style="left:779.5px;top:402.5px" width="10" height="10" viewBox="0 0 10 10"><rect x="3.6" y="0.4" width="2.8" height="2.6" fill="#b9c3dc"/><path d="M5 2.5 L1.6 8.3 M5 2.5 L8.4 8.3 M5 2.5 V8.3 M1.6 8.3 H8.4" fill="none" stroke="#b9c3dc" stroke-width="1"/><circle cx="1.6" cy="8.4" r="1.35" fill="#b9c3dc"/><circle cx="5" cy="8.4" r="1.35" fill="#b9c3dc"/><circle cx="8.4" cy="8.4" r="1.35" fill="#b9c3dc"/></svg>
<svg class="a" style="left:805.5px;top:402.5px" width="10" height="10" viewBox="0 0 10 10"><path d="M0 3.3 H5.5 M0 5 H5.5 M0 6.7 H5.5" stroke="#b9c3dc" stroke-width="1.05"/><path d="M5 1.6 L9.8 5 L5 8.4Z" fill="#b9c3dc"/></svg>
<svg class="a" style="left:831.8px;top:402.5px" width="10" height="10" viewBox="0 0 10 10"><circle cx="5" cy="5" r="4.3" fill="none" stroke="#b9c3dc" stroke-width="1.15"/><path d="M3 5 H7" stroke="#b9c3dc" stroke-width="1.3"/></svg>
<svg class="a" style="left:855.6px;top:402.5px" width="10" height="10" viewBox="0 0 10 10"><path d="M0.9 5 L3.7 8.3 L9.3 1.6" fill="none" stroke="#b9c3dc" stroke-width="2"/></svg>
<svg class="a" style="left:883.8px;top:402.5px" width="10" height="10" viewBox="0 0 10 10"><path d="M0.6 9.4 L1.1 7.2 L7.3 1 L9 2.7 L2.8 8.9 Z" fill="#b9c3dc"/><path d="M7.9 0.4 L8.5 -0.2 L10.2 1.5 L9.6 2.1Z" fill="#b9c3dc"/><path d="M5 9.7 H10" stroke="#b9c3dc" stroke-width="0.7"/></svg>
<div class="a" style="left:797px;top:397.5px;width:1px;height:17.5px;background:#f3f3f5"></div>
<div class="a" style="left:823.3px;top:397.5px;width:1px;height:17.5px;background:#f3f3f5"></div>
<div class="a" style="left:849.7px;top:397.5px;width:1px;height:17.5px;background:#f3f3f5"></div>
<div class="a" style="left:875.8px;top:397.5px;width:1px;height:17.5px;background:#f3f3f5"></div>
<div class="card" style="left:163px;top:447.8px"></div>
<svg class="a" style="left:163px;top:447.8px" width="9" height="9"><path d="M0 0 H8.5 L0 8.5Z" fill="#74c442"/></svg>
<div class="a" style="left:172.7px;top:461.8px;width:162px;font-size:9px;line-height:13.8px;color:#2e2e33;-webkit-text-stroke:0.22px #2e2e33;white-space:normal"><div style="letter-spacing:0.3px"><span style="letter-spacing:1.4px">2017</span>年<span style="letter-spacing:1.4px">12</span>月领导转办督察线索，拓展</div><div>字段...</div></div>
<svg class="a" style="left:173px;top:510.3px" width="10" height="11" viewBox="0 0 10 11"><path d="M5 10.3 C2.3 7 1 5.3 1 3.9 A4 4 0 0 1 9 3.9 C9 5.3 7.7 7 5 10.3Z" fill="none" stroke="#a9b3d0" stroke-width="0.9"/><circle cx="5" cy="4" r="1.4" fill="none" stroke="#a9b3d0" stroke-width="0.9"/></svg>
<div class="a" style="left:188px;top:509.8px;font-size:8px;letter-spacing:0.4px;line-height:12px;color:#8c8c8c">上海市-长宁区</div>
<svg class="a" style="left:269.8px;top:510.8px" width="10" height="10" viewBox="0 0 10 10"><circle cx="4.5" cy="3" r="2.4" fill="none" stroke="#a9b3d0" stroke-width="0.9"/><path d="M0.7 9.5 C0.7 6.8 2.4 5.7 4.5 5.7 C5.5 5.7 6.3 6 6.9 6.5" fill="none" stroke="#a9b3d0" stroke-width="0.9"/><path d="M6.3 8.2 H9.3 M6.3 9.5 H9.3" stroke="#a9b3d0" stroke-width="0.8"/></svg>
<div class="a" style="left:284.4px;top:509.8px;font-size:8px;letter-spacing:0.4px;line-height:12px;color:#8c8c8c">局领导</div>
<svg class="a" style="left:173px;top:534.3px" width="10" height="10" viewBox="0 0 10 10"><rect x="0.6" y="1.2" width="8.8" height="8.3" fill="none" stroke="#a9b3d0" stroke-width="0.9"/><path d="M0.6 3 H9.4" stroke="#a9b3d0" stroke-width="0.8"/><rect x="3.5" y="5" width="3" height="2.6" fill="#a9b3d0"/></svg>
<div class="a" style="left:188px;top:532.8px;font-size:9px;line-height:12px;color:#888">217-11-01</div>
<svg class="a" style="left:269.8px;top:534.3px" width="10" height="10" viewBox="0 0 10 10"><rect x="0.6" y="1.2" width="8.8" height="8.3" fill="none" stroke="#a9b3d0" stroke-width="0.9"/><path d="M0.6 3 H9.4" stroke="#a9b3d0" stroke-width="0.8"/><rect x="3.5" y="5" width="3" height="2.6" fill="#a9b3d0"/></svg>
<div class="a" style="left:284.4px;top:532.8px;font-size:9px;line-height:12px;color:#888">217-12-31</div>
<svg class="a" style="left:195.5px;top:568.3px" width="10" height="10" viewBox="0 0 10 10"><rect x="3.6" y="0.4" width="2.8" height="2.6" fill="#b9c3dc"/><path d="M5 2.5 L1.6 8.3 M5 2.5 L8.4 8.3 M5 2.5 V8.3 M1.6 8.3 H8.4" fill="none" stroke="#b9c3dc" stroke-width="1"/><circle cx="1.6" cy="8.4" r="1.35" fill="#b9c3dc"/><circle cx="5" cy="8.4" r="1.35" fill="#b9c3dc"/><circle cx="8.4" cy="8.4" r="1.35" fill="#b9c3dc"/></svg>
<svg class="a" style="left:221.5px;top:568.3px" width="10" height="10" viewBox="0 0 10 10"><path d="M0 3.3 H5.5 M0 5 H5.5 M0 6.7 H5.5" stroke="#b9c3dc" stroke-width="1.05"/><path d="M5 1.6 L9.8 5 L5 8.4Z" fill="#b9c3dc"/></svg>
<svg class="a" style="left:247.8px;top:568.3px" width="10" height="10" viewBox="0 0 10 10"><circle cx="5" cy="5" r="4.3" fill="none" stroke="#b9c3dc" stroke-width="1.15"/><path d="M3 5 H7" stroke="#b9c3dc" stroke-width="1.3"/></svg>
<svg class="a" style="left:271.6px;top:568.3px" width="10" height="10" viewBox="0 0 10 10"><path d="M0.9 5 L3.7 8.3 L9.3 1.6" fill="none" stroke="#b9c3dc" stroke-width="2"/></svg>
<svg class="a" style="left:299.8px;top:568.3px" width="10" height="10" viewBox="0 0 10 10"><path d="M0.6 9.4 L1.1 7.2 L7.3 1 L9 2.7 L2.8 8.9 Z" fill="#b9c3dc"/><path d="M7.9 0.4 L8.5 -0.2 L10.2 1.5 L9.6 2.1Z" fill="#b9c3dc"/><path d="M5 9.7 H10" stroke="#b9c3dc" stroke-width="0.7"/></svg>
<div class="a" style="left:213px;top:563.3px;width:1px;height:17.5px;background:#f3f3f5"></div>
<div class="a" style="left:239.3px;top:563.3px;width:1px;height:17.5px;background:#f3f3f5"></div>
<div class="a" style="left:265.7px;top:563.3px;width:1px;height:17.5px;background:#f3f3f5"></div>
<div class="a" style="left:291.8px;top:563.3px;width:1px;height:17.5px;background:#f3f3f5"></div>
<div class="card" style="left:358px;top:447.8px"></div>
<svg class="a" style="left:358px;top:447.8px" width="9" height="9"><path d="M0 0 H8.5 L0 8.5Z" fill="#6b8fdf"/></svg>
<div class="a" style="left:367.7px;top:461.8px;width:162px;font-size:9px;line-height:13.8px;color:#2e2e33;-webkit-text-stroke:0.22px #2e2e33;white-space:normal"><div style="text-align:justify;text-align-last:justify">关于督察任务分发事宜，会议讨论工作</div><div>开展</div></div>
<svg class="a" style="left:368px;top:510.3px" width="10" height="11" viewBox="0 0 10 11"><path d="M5 10.3 C2.3 7 1 5.3 1 3.9 A4 4 0 0 1 9 3.9 C9 5.3 7.7 7 5 10.3Z" fill="none" stroke="#a9b3d0" stroke-width="0.9"/><circle cx="5" cy="4" r="1.4" fill="none" stroke="#a9b3d0" stroke-width="0.9"/></svg>
<div class="a" style="left:383px;top:509.8px;font-size:8px;letter-spacing:0.4px;line-height:12px;color:#8c8c8c">上海市-长宁区</div>
<svg class="a" style="left:464.8px;top:510.8px" width="10" height="10" viewBox="0 0 10 10"><circle cx="4.5" cy="3" r="2.4" fill="none" stroke="#a9b3d0" stroke-width="0.9"/><path d="M0.7 9.5 C0.7 6.8 2.4 5.7 4.5 5.7 C5.5 5.7 6.3 6 6.9 6.5" fill="none" stroke="#a9b3d0" stroke-width="0.9"/><path d="M6.3 8.2 H9.3 M6.3 9.5 H9.3" stroke="#a9b3d0" stroke-width="0.8"/></svg>
<div class="a" style="left:479.4px;top:509.8px;font-size:8px;letter-spacing:0.4px;line-height:12px;color:#8c8c8c">王珊珊</div>
<svg class="a" style="left:368px;top:534.3px" width="10" height="10" viewBox="0 0 10 10"><rect x="0.6" y="1.2" width="8.8" height="8.3" fill="none" stroke="#a9b3d0" stroke-width="0.9"/><path d="M0.6 3 H9.4" stroke="#a9b3d0" stroke-width="0.8"/><rect x="3.5" y="5" width="3" height="2.6" fill="#a9b3d0"/></svg>
<div class="a" style="left:383px;top:532.8px;font-size:9px;line-height:12px;color:#888">217-11-01</div>
<svg class="a" style="left:464.8px;top:534.3px" width="10" height="10" viewBox="0 0 10 10"><rect x="0.6" y="1.2" width="8.8" height="8.3" fill="none" stroke="#a9b3d0" stroke-width="0.9"/><path d="M0.6 3 H9.4" stroke="#a9b3d0" stroke-width="0.8"/><rect x="3.5" y="5" width="3" height="2.6" fill="#a9b3d0"/></svg>
<div class="a" style="left:479.4px;top:532.8px;font-size:9px;line-height:12px;color:#888">217-12-31</div>
<svg class="a" style="left:390.5px;top:568.3px" width="10" height="10" viewBox="0 0 10 10"><rect x="3.6" y="0.4" width="2.8" height="2.6" fill="#b9c3dc"/><path d="M5 2.5 L1.6 8.3 M5 2.5 L8.4 8.3 M5 2.5 V8.3 M1.6 8.3 H8.4" fill="none" stroke="#b9c3dc" stroke-width="1"/><circle cx="1.6" cy="8.4" r="1.35" fill="#b9c3dc"/><circle cx="5" cy="8.4" r="1.35" fill="#b9c3dc"/><circle cx="8.4" cy="8.4" r="1.35" fill="#b9c3dc"/></svg>
<svg class="a" style="left:416.5px;top:568.3px" width="10" height="10" viewBox="0 0 10 10"><path d="M0 3.3 H5.5 M0 5 H5.5 M0 6.7 H5.5" stroke="#b9c3dc" stroke-width="1.05"/><path d="M5 1.6 L9.8 5 L5 8.4Z" fill="#b9c3dc"/></svg>
<svg class="a" style="left:442.8px;top:568.3px" width="10" height="10" viewBox="0 0 10 10"><circle cx="5" cy="5" r="4.3" fill="none" stroke="#b9c3dc" stroke-width="1.15"/><path d="M3 5 H7" stroke="#b9c3dc" stroke-width="1.3"/></svg>
<svg class="a" style="left:466.6px;top:568.3px" width="10" height="10" viewBox="0 0 10 10"><path d="M0.9 5 L3.7 8.3 L9.3 1.6" fill="none" stroke="#b9c3dc" stroke-width="2"/></svg>
<svg class="a" style="left:494.8px;top:568.3px" width="10" height="10" viewBox="0 0 10 10"><path d="M0.6 9.4 L1.1 7.2 L7.3 1 L9 2.7 L2.8 8.9 Z" fill="#b9c3dc"/><path d="M7.9 0.4 L8.5 -0.2 L10.2 1.5 L9.6 2.1Z" fill="#b9c3dc"/><path d="M5 9.7 H10" stroke="#b9c3dc" stroke-width="0.7"/></svg>
<div class="a" style="left:408px;top:563.3px;width:1px;height:17.5px;background:#f3f3f5"></div>
<div class="a" style="left:434.3px;top:563.3px;width:1px;height:17.5px;background:#f3f3f5"></div>
<div class="a" style="left:460.7px;top:563.3px;width:1px;height:17.5px;background:#f3f3f5"></div>
<div class="a" style="left:486.8px;top:563.3px;width:1px;height:17.5px;background:#f3f3f5"></div>
<div class="card" style="left:552.5px;top:447.8px"></div>
<svg class="a" style="left:552.5px;top:447.8px" width="9" height="9"><path d="M0 0 H8.5 L0 8.5Z" fill="#6b8fdf"/></svg>
<div class="a" style="left:562.2px;top:461.8px;width:162px;font-size:9px;line-height:13.8px;color:#2e2e33;-webkit-text-stroke:0.22px #2e2e33;white-space:normal"><div style="text-align:justify;text-align-last:justify">此处是标题，示意效果此处是标题，示</div><div>意效果</div></div>
<svg class="a" style="left:562.5px;top:510.3px" width="10" height="11" viewBox="0 0 10 11"><path d="M5 10.3 C2.3 7 1 5.3 1 3.9 A4 4 0 0 1 9 3.9 C9 5.3 7.7 7 5 10.3Z" fill="none" stroke="#a9b3d0" stroke-width="0.9"/><circle cx="5" cy="4" r="1.4" fill="none" stroke="#a9b3d0" stroke-width="0.9"/></svg>
<div class="a" style="left:577.5px;top:509.8px;font-size:8px;letter-spacing:0.4px;line-height:12px;color:#8c8c8c">上海市-长宁区</div>
<svg class="a" style="left:659.3px;top:510.8px" width="10" height="10" viewBox="0 0 10 10"><circle cx="4.5" cy="3" r="2.4" fill="none" stroke="#a9b3d0" stroke-width="0.9"/><path d="M0.7 9.5 C0.7 6.8 2.4 5.7 4.5 5.7 C5.5 5.7 6.3 6 6.9 6.5" fill="none" stroke="#a9b3d0" stroke-width="0.9"/><path d="M6.3 8.2 H9.3 M6.3 9.5 H9.3" stroke="#a9b3d0" stroke-width="0.8"/></svg>
<div class="a" style="left:673.9px;top:509.8px;font-size:8px;letter-spacing:0.4px;line-height:12px;color:#8c8c8c">张三</div>
<svg class="a" style="left:562.5px;top:534.3px" width="10" height="10" viewBox="0 0 10 10"><rect x="0.6" y="1.2" width="8.8" height="8.3" fill="none" stroke="#a9b3d0" stroke-width="0.9"/><path d="M0.6 3 H9.4" stroke="#a9b3d0" stroke-width="0.8"/><rect x="3.5" y="5" width="3" height="2.6" fill="#a9b3d0"/></svg>
<div class="a" style="left:577.5px;top:532.8px;font-size:9px;line-height:12px;color:#888">217-11-01</div>
<svg class="a" style="left:659.3px;top:534.3px" width="10" height="10" viewBox="0 0 10 10"><rect x="0.6" y="1.2" width="8.8" height="8.3" fill="none" stroke="#a9b3d0" stroke-width="0.9"/><path d="M0.6 3 H9.4" stroke="#a9b3d0" stroke-width="0.8"/><rect x="3.5" y="5" width="3" height="2.6" fill="#a9b3d0"/></svg>
<div class="a" style="left:673.9px;top:532.8px;font-size:9px;line-height:12px;color:#888">217-12-31</div>
<svg class="a" style="left:585.0px;top:568.3px" width="10" height="10" viewBox="0 0 10 10"><rect x="3.6" y="0.4" width="2.8" height="2.6" fill="#b9c3dc"/><path d="M5 2.5 L1.6 8.3 M5 2.5 L8.4 8.3 M5 2.5 V8.3 M1.6 8.3 H8.4" fill="none" stroke="#b9c3dc" stroke-width="1"/><circle cx="1.6" cy="8.4" r="1.35" fill="#b9c3dc"/><circle cx="5" cy="8.4" r="1.35" fill="#b9c3dc"/><circle cx="8.4" cy="8.4" r="1.35" fill="#b9c3dc"/></svg>
<svg class="a" style="left:611.0px;top:568.3px" width="10" height="10" viewBox="0 0 10 10"><path d="M0 3.3 H5.5 M0 5 H5.5 M0 6.7 H5.5" stroke="#b9c3dc" stroke-width="1.05"/><path d="M5 1.6 L9.8 5 L5 8.4Z" fill="#b9c3dc"/></svg>
<svg class="a" style="left:637.3px;top:568.3px" width="10" height="10" viewBox="0 0 10 10"><circle cx="5" cy="5" r="4.3" fill="none" stroke="#b9c3dc" stroke-width="1.15"/><path d="M3 5 H7" stroke="#b9c3dc" stroke-width="1.3"/></svg>
<svg class="a" style="left:661.1px;top:568.3px" width="10" height="10" viewBox="0 0 10 10"><path d="M0.9 5 L3.7 8.3 L9.3 1.6" fill="none" stroke="#b9c3dc" stroke-width="2"/></svg>
<svg class="a" style="left:689.3px;top:568.3px" width="10" height="10" viewBox="0 0 10 10"><path d="M0.6 9.4 L1.1 7.2 L7.3 1 L9 2.7 L2.8 8.9 Z" fill="#b9c3dc"/><path d="M7.9 0.4 L8.5 -0.2 L10.2 1.5 L9.6 2.1Z" fill="#b9c3dc"/><path d="M5 9.7 H10" stroke="#b9c3dc" stroke-width="0.7"/></svg>
<div class="a" style="left:602.5px;top:563.3px;width:1px;height:17.5px;background:#f3f3f5"></div>
<div class="a" style="left:628.8px;top:563.3px;width:1px;height:17.5px;background:#f3f3f5"></div>
<div class="a" style="left:655.2px;top:563.3px;width:1px;height:17.5px;background:#f3f3f5"></div>
<div class="a" style="left:681.3px;top:563.3px;width:1px;height:17.5px;background:#f3f3f5"></div>
<div class="card" style="left:747px;top:447.8px"></div>
<svg class="a" style="left:747px;top:447.8px" width="9" height="9"><path d="M0 0 H8.5 L0 8.5Z" fill="#6b8fdf"/></svg>
<div class="a" style="left:756.7px;top:461.8px;width:162px;font-size:9px;line-height:13.8px;color:#2e2e33;-webkit-text-stroke:0.22px #2e2e33;white-space:normal"><div style="text-align:justify;text-align-last:justify">栏目标题微软雅黑分发事宜，会议讨论工</div><div>作开展</div></div>
<svg class="a" style="left:757px;top:510.3px" width="10" height="11" viewBox="0 0 10 11"><path d="M5 10.3 C2.3 7 1 5.3 1 3.9 A4 4 0 0 1 9 3.9 C9 5.3 7.7 7 5 10.3Z" fill="none" stroke="#a9b3d0" stroke-width="0.9"/><circle cx="5" cy="4" r="1.4" fill="none" stroke="#a9b3d0" stroke-width="0.9"/></svg>
<div class="a" style="left:772px;top:509.8px;font-size:8px;letter-spacing:0.4px;line-height:12px;color:#8c8c8c">上海市-长宁区</div>
<svg class="a" style="left:853.8px;top:510.8px" width="10" height="10" viewBox="0 0 10 10"><circle cx="4.5" cy="3" r="2.4" fill="none" stroke="#a9b3d0" stroke-width="0.9"/><path d="M0.7 9.5 C0.7 6.8 2.4 5.7 4.5 5.7 C5.5 5.7 6.3 6 6.9 6.5" fill="none" stroke="#a9b3d0" stroke-width="0.9"/><path d="M6.3 8.2 H9.3 M6.3 9.5 H9.3" stroke="#a9b3d0" stroke-width="0.8"/></svg>
<div class="a" style="left:868.4px;top:509.8px;font-size:8px;letter-spacing:0.4px;line-height:12px;color:#8c8c8c">刘卫凤</div>
<svg class="a" style="left:757px;top:534.3px" width="10" height="10" viewBox="0 0 10 10"><rect x="0.6" y="1.2" width="8.8" height="8.3" fill="none" stroke="#a9b3d0" stroke-width="0.9"/><path d="M0.6 3 H9.4" stroke="#a9b3d0" stroke-width="0.8"/><rect x="3.5" y="5" width="3" height="2.6" fill="#a9b3d0"/></svg>
<div class="a" style="left:772px;top:532.8px;font-size:9px;line-height:12px;color:#888">217-11-01</div>
<svg class="a" style="left:853.8px;top:534.3px" width="10" height="10" viewBox="0 0 10 10"><rect x="0.6" y="1.2" width="8.8" height="8.3" fill="none" stroke="#a9b3d0" stroke-width="0.9"/><path d="M0.6 3 H9.4" stroke="#a9b3d0" stroke-width="0.8"/><rect x="3.5" y="5" width="3" height="2.6" fill="#a9b3d0"/></svg>
<div class="a" style="left:868.4px;top:532.8px;font-size:9px;line-height:12px;color:#888">217-12-31</div>
<svg class="a" style="left:779.5px;top:568.3px" width="10" height="10" viewBox="0 0 10 10"><rect x="3.6" y="0.4" width="2.8" height="2.6" fill="#b9c3dc"/><path d="M5 2.5 L1.6 8.3 M5 2.5 L8.4 8.3 M5 2.5 V8.3 M1.6 8.3 H8.4" fill="none" stroke="#b9c3dc" stroke-width="1"/><circle cx="1.6" cy="8.4" r="1.35" fill="#b9c3dc"/><circle cx="5" cy="8.4" r="1.35" fill="#b9c3dc"/><circle cx="8.4" cy="8.4" r="1.35" fill="#b9c3dc"/></svg>
<svg class="a" style="left:805.5px;top:568.3px" width="10" height="10" viewBox="0 0 10 10"><path d="M0 3.3 H5.5 M0 5 H5.5 M0 6.7 H5.5" stroke="#b9c3dc" stroke-width="1.05"/><path d="M5 1.6 L9.8 5 L5 8.4Z" fill="#b9c3dc"/></svg>
<svg class="a" style="left:831.8px;top:568.3px" width="10" height="10" viewBox="0 0 10 10"><circle cx="5" cy="5" r="4.3" fill="none" stroke="#b9c3dc" stroke-width="1.15"/><path d="M3 5 H7" stroke="#b9c3dc" stroke-width="1.3"/></svg>
<svg class="a" style="left:855.6px;top:568.3px" width="10" height="10" viewBox="0 0 10 10"><path d="M0.9 5 L3.7 8.3 L9.3 1.6" fill="none" stroke="#b9c3dc" stroke-width="2"/></svg>
<svg class="a" style="left:883.8px;top:568.3px" width="10" height="10" viewBox="0 0 10 10"><path d="M0.6 9.4 L1.1 7.2 L7.3 1 L9 2.7 L2.8 8.9 Z" fill="#b9c3dc"/><path d="M7.9 0.4 L8.5 -0.2 L10.2 1.5 L9.6 2.1Z" fill="#b9c3dc"/><path d="M5 9.7 H10" stroke="#b9c3dc" stroke-width="0.7"/></svg>
<div class="a" style="left:797px;top:563.3px;width:1px;height:17.5px;background:#f3f3f5"></div>
<div class="a" style="left:823.3px;top:563.3px;width:1px;height:17.5px;background:#f3f3f5"></div>
<div class="a" style="left:849.7px;top:563.3px;width:1px;height:17.5px;background:#f3f3f5"></div>
<div class="a" style="left:875.8px;top:563.3px;width:1px;height:17.5px;background:#f3f3f5"></div>
<div class="a" style="left:0;top:538.6px;width:966px;height:4px;background:#f1f1f1"></div>
<div class="a" style="left:935px;top:281.5px;width:4.5px;height:204px;border-radius:2px;background:#dcdfe9"></div>
<div class="a" style="left:849px;top:275.5px;width:26px;height:13.7px;background:#fff;border:1px solid #9a9a9a;box-shadow:1px 1px 2px rgba(0,0,0,0.25);font-size:8px;line-height:11.5px;color:#444;text-align:center">导入</div>
<svg class="a" style="left:846.5px;top:268.5px" width="7" height="8" viewBox="0 0 7 8"><path d="M0.5 0.5 L0.5 6.5 L2 5.2 L3.3 7.5 L4.3 7 L3.2 4.8 L5.3 4.6 Z" fill="#222" stroke="#fff" stroke-width="0.4"/></svg>
</body></html>
